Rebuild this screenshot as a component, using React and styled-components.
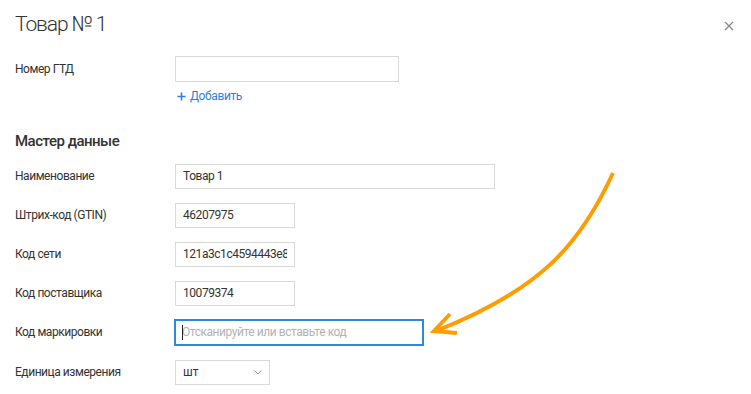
import React from "react";
import styled, { createGlobalStyle } from "styled-components";

const Global = createGlobalStyle`
  html, body { margin: 0; padding: 0; background: #fff; }
  body { font-family: "Roboto", "Liberation Sans", Arial, sans-serif; color: #333; }
  * { box-sizing: border-box; }
`;

const Page = styled.div`
  position: relative;
  width: 751px;
  height: 394px;
  overflow: hidden;
  padding: 10px 15px 0 15px;
`;

const Header = styled.div`
  display: flex;
  justify-content: space-between;
  align-items: center;
  height: 28px;
`;

const Title = styled.h1`
  margin: 0;
  font-size: 21px;
  font-weight: 300;
  line-height: 28px;
  letter-spacing: -1.1px;
  color: #333;
`;

const Close = styled.button`
  width: 14px;
  height: 14px;
  padding: 0;
  border: 0;
  background: none;
  display: flex;
  align-items: center;
  justify-content: center;
  cursor: pointer;
  margin-top: 4px;
`;

const Row = styled.div`
  display: grid;
  grid-template-columns: 160px 1fr;
  align-items: center;
  margin-top: ${(p) => p.$mt ?? 14}px;
`;

const Label = styled.label`
  font-size: 12px;
  line-height: 16px;
  letter-spacing: -0.45px;
  color: #333;
`;

const Input = styled.input`
  width: ${(p) => p.$w}px;
  height: ${(p) => p.$h ?? 25}px;
  border: 1px solid #d9d9d9;
  border-radius: 0;
  padding: 0 7px;
  font-family: inherit;
  font-size: 12px;
  letter-spacing: -0.45px;
  color: #333;
  outline: none;
  background: #fff;
  &::placeholder { color: #b3b3b3; }
`;

const FocusInput = styled(Input)`
  border: 2px solid #2e8ad8;
  width: ${(p) => p.$w}px;
  height: 27px;
  padding: 0 6px;
`;

const FocusWrap = styled.div`
  position: relative;
  margin-left: -1px;
  width: max-content;
  &::after {
    content: "";
    position: absolute;
    left: 8px;
    top: 6px;
    width: 1px;
    height: 15px;
    background: #222;
  }
`;

const AddLink = styled.a`
  display: inline-flex;
  align-items: center;
  gap: 4px;
  margin: 6px 0 0 162px;
  font-size: 12px;
  line-height: 16px;
  letter-spacing: -0.4px;
  color: #2f82d4;
  text-decoration: none;
  cursor: pointer;
`;

const SectionTitle = styled.h2`
  margin: 26px 0 0 0;
  font-size: 15px;
  font-weight: 500;
  line-height: 20px;
  letter-spacing: -0.5px;
  color: #333;
`;

const Select = styled.div`
  width: 95px;
  height: 25px;
  border: 1px solid #d9d9d9;
  display: flex;
  align-items: center;
  justify-content: space-between;
  padding: 0 7px 0 7px;
  font-size: 12px;
  color: #333;
`;

const Overlay = styled.svg`
  position: absolute;
  left: 0;
  top: 0;
  pointer-events: none;
`;

export default function App() {
  return (
    <>
      <Global />
      <Page>
        <Header>
          <Title>Товар № 1</Title>
          <Close aria-label="Закрыть">
            <svg width="10" height="10" viewBox="0 0 10 10">
              <path d="M1 1 L9 9 M9 1 L1 9" stroke="#8a8a8a" strokeWidth="1.3" fill="none" />
            </svg>
          </Close>
        </Header>

        <Row $mt={18}>
          <Label>Номер ГТД</Label>
          <Input $w={224} $h={26} />
        </Row>
        <AddLink>
          <svg width="9" height="9" viewBox="0 0 9 9">
            <path d="M4.5 0.5 V8.5 M0.5 4.5 H8.5" stroke="#2f82d4" strokeWidth="1.6" />
          </svg>
          Добавить
        </AddLink>

        <SectionTitle>Мастер данные</SectionTitle>

        <Row $mt={13}>
          <Label>Наименование</Label>
          <Input $w={320} defaultValue="Товар 1" />
        </Row>
        <Row>
          <Label>Штрих-код (GTIN)</Label>
          <Input $w={120} defaultValue="46207975" />
        </Row>
        <Row>
          <Label>Код сети</Label>
          <Input $w={120} defaultValue="121a3c1c4594443e8c" />
        </Row>
        <Row>
          <Label>Код поставщика</Label>
          <Input $w={120} defaultValue="10079374" />
        </Row>
        <Row $mt={13}>
          <Label>Код маркировки</Label>
          <FocusWrap>
            <FocusInput $w={250} placeholder="Отсканируйте или вставьте код" />
          </FocusWrap>
        </Row>
        <Row $mt={14}>
          <Label>Единица измерения</Label>
          <Select>
            шт
            <svg width="8" height="5" viewBox="0 0 8 5">
              <path d="M0.5 0.5 L4 4 L7.5 0.5" stroke="#9a9a9a" strokeWidth="1" fill="none" />
            </svg>
          </Select>
        </Row>

        <Overlay width="751" height="394" viewBox="0 0 751 394">
          <path
            d="M613 173 C580 245 540 290 436 331"
            stroke="#ff9d00"
            strokeWidth="4"
            fill="none"
          />
          <path
            d="M450 314 L434 331 L457 333"
            stroke="#ff9d00"
            strokeWidth="4"
            fill="none"
            strokeLinejoin="miter"
          />
        </Overlay>
      </Page>
    </>
  );
}
